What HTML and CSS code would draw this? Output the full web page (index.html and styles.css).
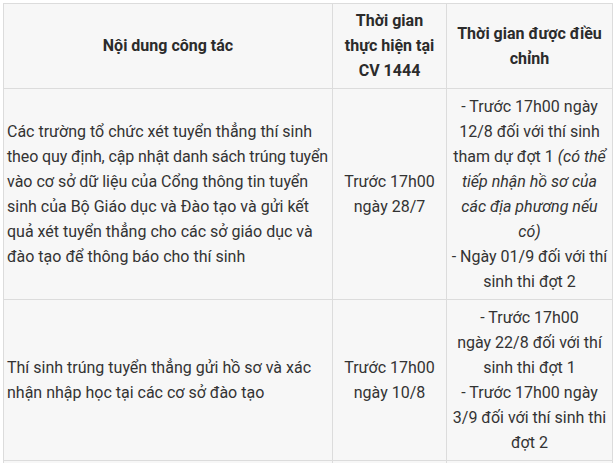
FILE: index.html
```html
<!DOCTYPE html>
<html lang="vi">
<head>
<meta charset="utf-8">
<link rel="stylesheet" href="styles.css">
</head>
<body>
<table class="schedule">
  <colgroup>
    <col class="col-task">
    <col class="col-orig">
    <col class="col-adj">
  </colgroup>
  <thead>
    <tr>
      <th>Nội dung công tác</th>
      <th>Thời gian<br>thực hiện tại<br>CV 1444</th>
      <th>Thời gian được điều<br>chỉnh</th>
    </tr>
  </thead>
  <tbody>
    <tr>
      <td class="task">Các trường tổ chức xét tuyển thẳng thí sinh<br><span class="tight">theo quy định, cập nhật danh sách trúng tuyển</span><br>vào cơ sở dữ liệu của Cổng thông tin tuyển<br>sinh của Bộ Giáo dục và Đào tạo và gửi kết<br>quả xét tuyển thẳng cho các sở giáo dục và<br>đào tạo để thông báo cho thí sinh</td>
      <td>Trước 17h00<br>ngày 28/7</td>
      <td>- Trước 17h00 ngày<br>12/8 đối với thí sinh<br>tham dự đợt 1 <em>(có thể<br>tiếp nhận hồ sơ của<br>các địa phương nếu<br>có)</em><br>- Ngày 01/9 đối với thí<br>sinh thi đợt 2</td>
    </tr>
    <tr>
      <td class="task">Thí sinh trúng tuyển thẳng gửi hồ sơ và xác<br>nhận nhập học tại các cơ sở đào tạo</td>
      <td>Trước 17h00<br>ngày 10/8</td>
      <td>- Trước 17h00<br>ngày 22/8 đối với thí<br>sinh thi đợt 1<br>- Trước 17h00 ngày<br>3/9 đối với thí sinh thi<br>đợt 2</td>
    </tr>
    <tr class="next">
      <td></td><td></td><td></td>
    </tr>
  </tbody>
</table>
</body>
</html>
```

FILE: styles.css
```css
html, body {
  margin: 0;
  padding: 0;
  background: #ffffff;
}

body {
  padding: 3px 0 0 3px;
  font-family: Roboto, "Noto Sans", "Liberation Sans", sans-serif;
  font-size: 16px;
  line-height: 25px;
  color: #333333;
}

.schedule {
  border-collapse: collapse;
  table-layout: fixed;
  width: 609px;
  background: #f7f7f7;
}

.col-task { width: 329px; }
.col-orig { width: 114px; }
.col-adj { width: 166px; }

.schedule th,
.schedule td {
  border: 1px solid #dcdcdc;
  padding: 5px 2px;
  text-align: center;
  vertical-align: middle;
  white-space: nowrap;
}

.schedule th {
  padding: 4px 2px 5px;
  font-weight: bold;
  color: #2b2b2b;
}

.schedule td.task {
  text-align: left;
  padding-left: 3px;
  padding-right: 1px;
}

.schedule .tight {
  letter-spacing: -0.12px;
}

.schedule em {
  font-style: italic;
}

.schedule tr.next td {
  height: 20px;
  padding: 0;
}
```
